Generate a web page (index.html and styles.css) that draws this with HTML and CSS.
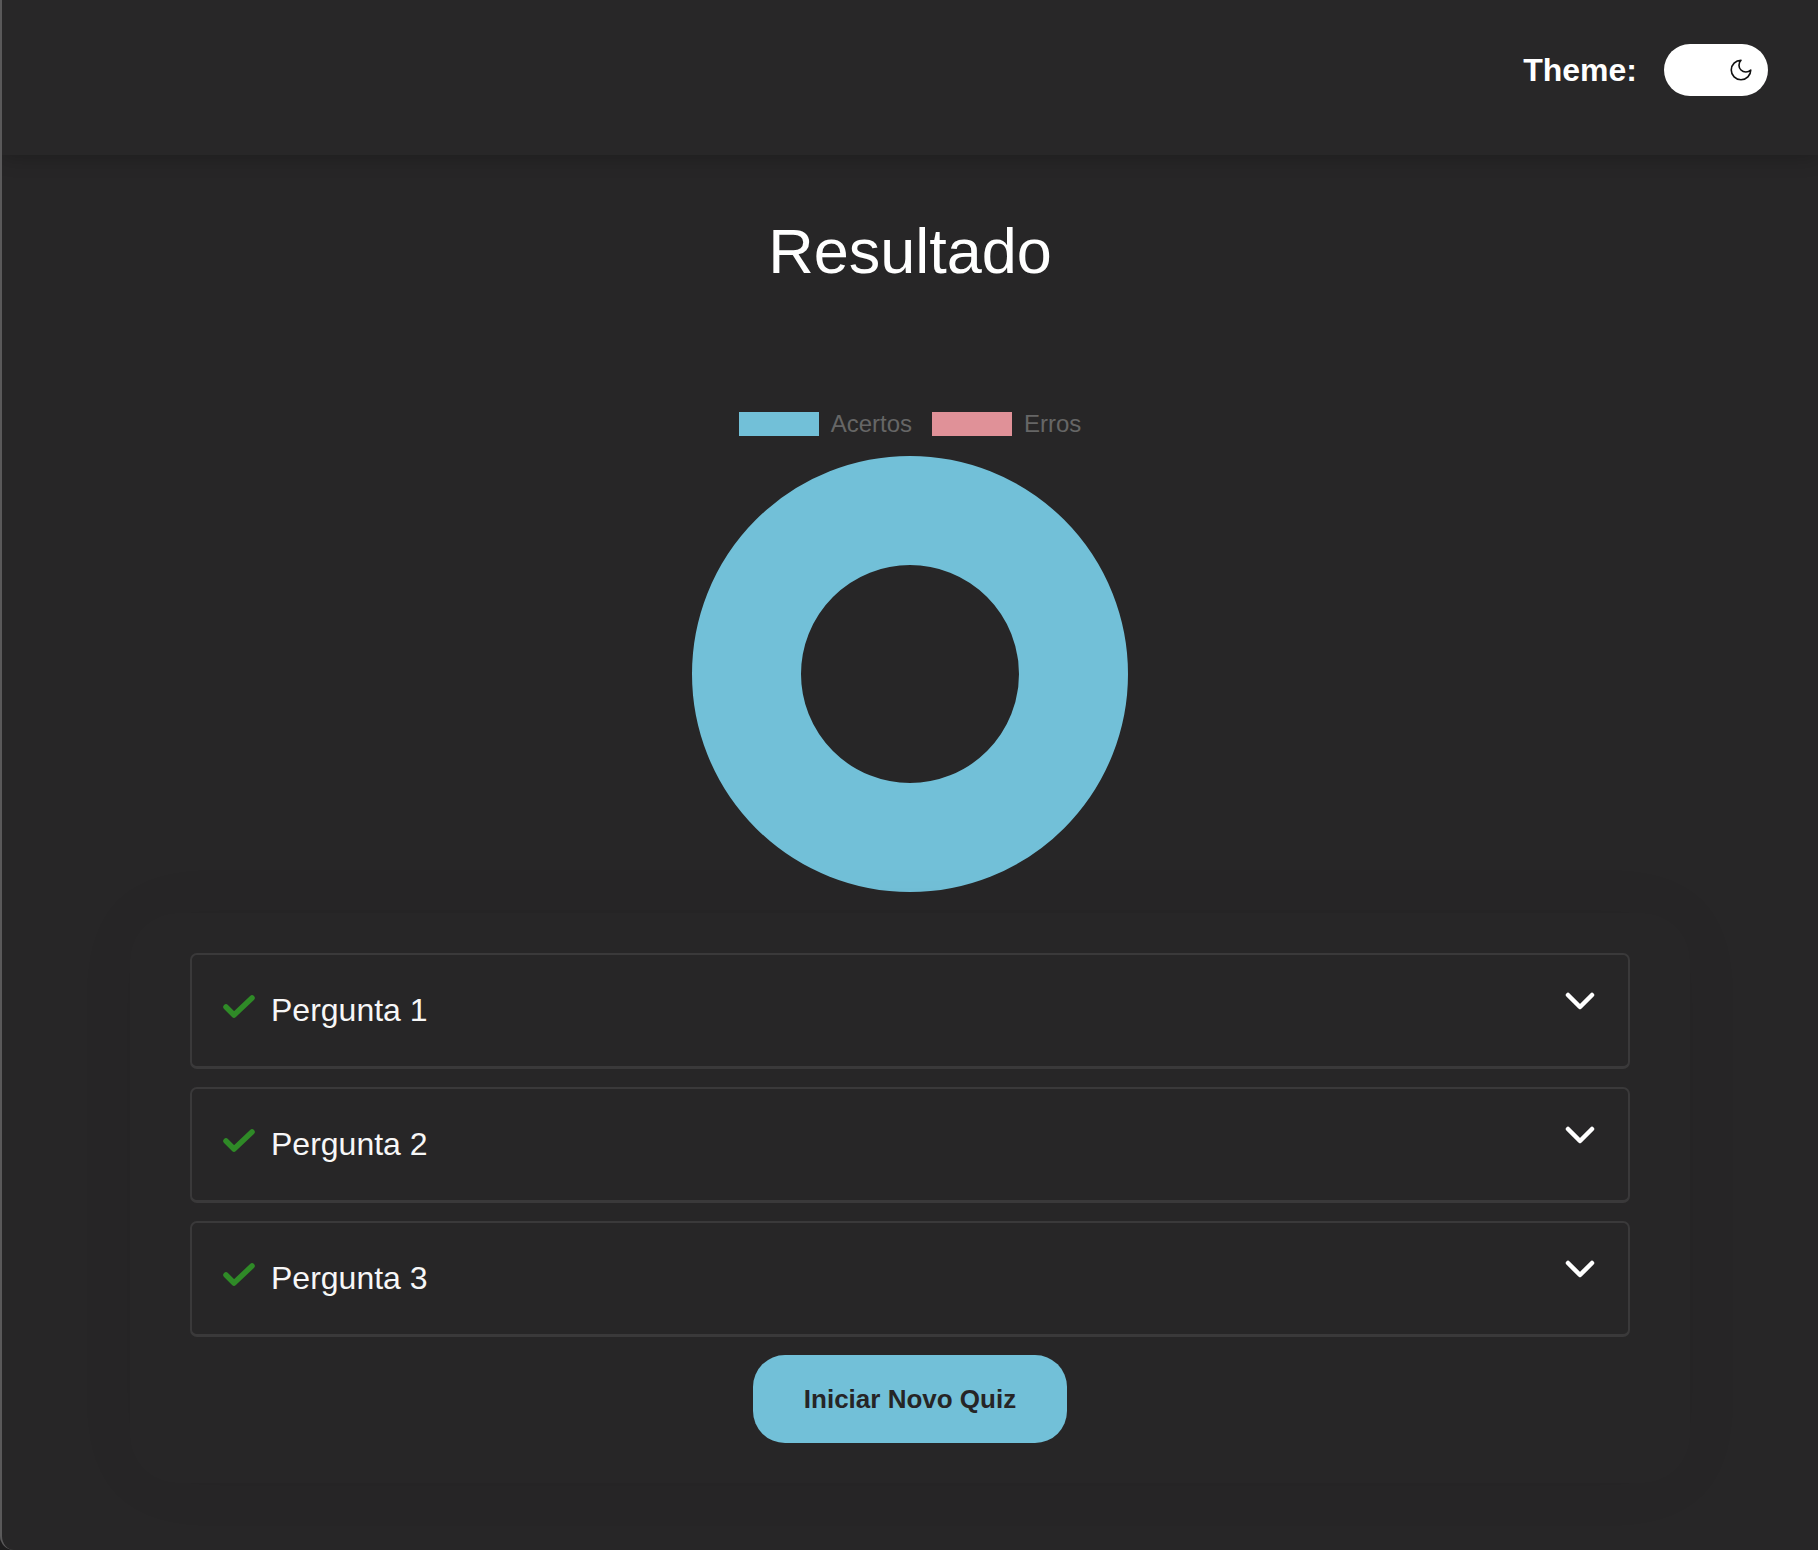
FILE: index.html
```html
<!DOCTYPE html>
<html lang="pt">
<head>
<meta charset="utf-8">
<title>Resultado</title>
<link rel="stylesheet" href="styles.css">
</head>
<body>
<div class="app">
  <header class="topbar">
    <span class="theme-label">Theme:</span>
    <div class="toggle">
      <svg class="moon" viewBox="0 0 24 24" width="26" height="26" fill="none" stroke="#111" stroke-width="1.5" stroke-linecap="round" stroke-linejoin="round"><path d="M12 3a6 6 0 0 0 9 9 9 9 0 1 1-9-9Z"/></svg>
    </div>
  </header>
  <main class="main">
    <h1 class="title">Resultado</h1>
    <div class="legend">
      <span class="legend-box acertos"></span><span class="legend-text">Acertos</span>
      <span class="legend-box erros"></span><span class="legend-text">Erros</span>
    </div>
    <svg class="donut" width="436" height="436" viewBox="0 0 436 436">
      <circle cx="218" cy="218" r="163.5" fill="none" stroke="#72c0d8" stroke-width="109"/>
    </svg>
    <section class="results">
      <div class="card">
        <svg class="check" width="32" height="26" viewBox="0 0 32 26"><polyline points="3,13 11,21 29,4" fill="none" stroke="#2f8a27" stroke-width="5.5" stroke-linecap="round" stroke-linejoin="round"/></svg>
        <span class="q">Pergunta 1</span>
        <svg class="chev" width="30" height="19" viewBox="0 0 30 19"><polyline points="3,3 15,15 27,3" fill="none" stroke="#fff" stroke-width="4.5" stroke-linecap="round" stroke-linejoin="round"/></svg>
      </div>
      <div class="card">
        <svg class="check" width="32" height="26" viewBox="0 0 32 26"><polyline points="3,13 11,21 29,4" fill="none" stroke="#2f8a27" stroke-width="5.5" stroke-linecap="round" stroke-linejoin="round"/></svg>
        <span class="q">Pergunta 2</span>
        <svg class="chev" width="30" height="19" viewBox="0 0 30 19"><polyline points="3,3 15,15 27,3" fill="none" stroke="#fff" stroke-width="4.5" stroke-linecap="round" stroke-linejoin="round"/></svg>
      </div>
      <div class="card">
        <svg class="check" width="32" height="26" viewBox="0 0 32 26"><polyline points="3,13 11,21 29,4" fill="none" stroke="#2f8a27" stroke-width="5.5" stroke-linecap="round" stroke-linejoin="round"/></svg>
        <span class="q">Pergunta 3</span>
        <svg class="chev" width="30" height="19" viewBox="0 0 30 19"><polyline points="3,3 15,15 27,3" fill="none" stroke="#fff" stroke-width="4.5" stroke-linecap="round" stroke-linejoin="round"/></svg>
      </div>
      <button class="btn">Iniciar Novo Quiz</button>
    </section>
  </main>
</div>
</body>
</html>
```
FILE: styles.css
```css
* { box-sizing: border-box; }
html, body {
  margin: 0;
  padding: 0;
  background: #1e1d1e;
  font-family: "Liberation Sans", Arial, sans-serif;
}
.app {
  width: 1818px;
  height: 1550px;
  background: #272627;
  border-left: 2px solid #5a595a;
  border-bottom-left-radius: 14px;
  overflow: hidden;
  color: #fff;
}
.topbar {
  height: 155px;
  display: flex;
  align-items: center;
  justify-content: flex-end;
  padding-right: 50px;
  padding-bottom: 15px;
  background: #282728;
  box-shadow: 0 3px 18px rgba(0, 0, 0, 0.22);
  position: relative;
}
.theme-label {
  font-size: 32px;
  font-weight: bold;
  margin-right: 27px;
  color: #fff;
}
.toggle {
  width: 104px;
  height: 52px;
  border-radius: 26px;
  background: #fff;
  display: flex;
  align-items: center;
  justify-content: flex-end;
  padding-right: 14px;
}
.main {
  display: flex;
  flex-direction: column;
  align-items: center;
}
.title {
  margin: 60px 0 0;
  font-size: 63px;
  line-height: 72px;
  font-weight: normal;
  color: #fff;
}
.legend {
  margin-top: 125px;
  height: 24px;
  display: flex;
  align-items: center;
}
.legend-box {
  width: 80px;
  height: 24px;
  margin-right: 12px;
}
.legend-box.acertos { background: #72c0d8; }
.legend-box.erros { background: #e09198; }
.legend-text {
  font-size: 24px;
  color: #666;
  margin-right: 20px;
  line-height: 24px;
}
.legend-text:last-child { margin-right: 0; }
.donut {
  margin-top: 20px;
  display: block;
}
.results {
  margin-top: 21px;
  width: 1560px;
  padding: 40px 60px 40px;
  border-radius: 48px;
  box-shadow: 0 0 60px rgba(0, 0, 0, 0.06);
  display: flex;
  flex-direction: column;
  align-items: center;
  gap: 18px;
}
.card {
  width: 1440px;
  height: 116px;
  border: 2px solid #3a393a;
  border-bottom-width: 3px;
  border-radius: 7px;
  background: #272627;
  display: flex;
  align-items: center;
  padding: 0 33px 0 31px;
}
.check {
  margin-top: -8px;
  margin-right: 16px;
  flex: none;
}
.q {
  font-size: 32px;
  color: #f7f7f7;
  flex: 1;
}
.chev {
  margin-top: -18px;
  flex: none;
}
.btn {
  margin-top: 0;
  width: 314px;
  height: 88px;
  border: none;
  border-radius: 32px;
  background: #72c0d8;
  color: #262526;
  font-family: "Liberation Sans", Arial, sans-serif;
  font-size: 26px;
  font-weight: bold;
  padding: 0;
}
```
